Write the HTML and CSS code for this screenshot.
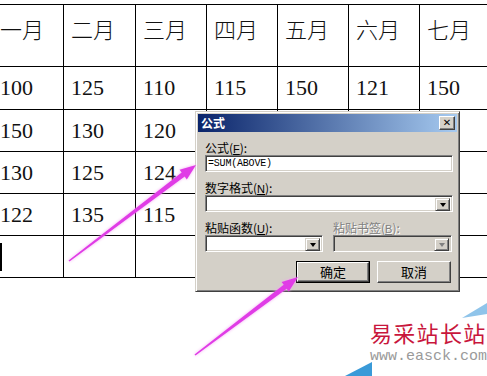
FILE: index.html
```html
<!DOCTYPE html>
<html lang="zh">
<head>
<meta charset="utf-8">
<link rel="stylesheet" href="styles.css">
</head>
<body>
<div class="page">
  <div class="sheet">
    <div class="cell head">一月</div><div class="cell head">二月</div><div class="cell head">三月</div><div class="cell head">四月</div><div class="cell head">五月</div><div class="cell head">六月</div><div class="cell head">七月</div>
    <div class="cell num">100</div><div class="cell num">125</div><div class="cell num">110</div><div class="cell num">115</div><div class="cell num">150</div><div class="cell num">121</div><div class="cell num">150</div>
    <div class="cell num">150</div><div class="cell num">130</div><div class="cell num">120</div><div class="cell num"></div><div class="cell num"></div><div class="cell num"></div><div class="cell num"></div>
    <div class="cell num">130</div><div class="cell num">125</div><div class="cell num">124</div><div class="cell num"></div><div class="cell num"></div><div class="cell num"></div><div class="cell num"></div>
    <div class="cell num">122</div><div class="cell num">135</div><div class="cell num">115</div><div class="cell num"></div><div class="cell num"></div><div class="cell num"></div><div class="cell num"></div>
    <div class="cell num"><span class="caret"></span></div><div class="cell num"></div><div class="cell num"></div><div class="cell num"></div><div class="cell num"></div><div class="cell num"></div><div class="cell num"></div>
  </div>

  <div class="dialog">
    <div class="titlebar">
      <span class="title">公式</span>
      <span class="close">✕</span>
    </div>
    <div class="body">
      <div class="label">公式(<u>F</u>):</div>
      <div class="field text">=SUM(ABOVE)</div>
      <div class="label gap">数字格式(<u>N</u>):</div>
      <div class="field combo"><span class="drop"><span class="tri"></span></span></div>
      <div class="pair gap2">
        <div class="col">
          <div class="label">粘贴函数(<u>U</u>):</div>
          <div class="field combo"><span class="drop"><span class="tri"></span></span></div>
        </div>
        <div class="col">
          <div class="label disabled">粘贴书签(<u>B</u>):</div>
          <div class="field combo off"><span class="drop"><span class="tri dim"></span></span></div>
        </div>
      </div>
      <div class="buttons">
        <div class="btn default"><span class="btn-in">确定</span></div>
        <div class="btn"><span class="btn-in">取消</span></div>
      </div>
    </div>
  </div>

  <svg class="overlay" width="487" height="376" viewBox="0 0 487 376">
    <polygon class="deco" points="462,318 487,303 487,314" />
    <polygon class="deco2" points="345,376 372,362 372,376" />
    <g class="arrow">
      <polygon points="68.5,260.4 181.7,172.6 179.6,169.8 196,165 186.8,179.4 184.7,176.6 69.5,261.6" />
      <polygon points="194.5,354.4 283.7,284.7 281.6,281.9 298,277 288.8,291.5 286.7,288.7 195.5,355.6" />
    </g>
  </svg>

  <div class="mark">
    <div class="mark-cn">易采站长站</div>
    <div class="mark-url">www.easck.com</div>
  </div>
</div>
</body>
</html>
```

FILE: styles.css
```css
html, body {
  margin: 0;
  padding: 0;
  background: #fff;
}
.page {
  position: relative;
  width: 487px;
  height: 376px;
  overflow: hidden;
  background: #fff;
}
.sheet {
  display: grid;
  grid-template-columns: 71px 72px 71px 71px 71px 71px 100px;
  grid-template-rows: 62px 43px 42px 42px 42px 42px;
  margin-left: -7px;
  padding-top: 5px;
  width: 530px;
}
.cell {
  box-sizing: border-box;
  border-right: 1px solid #000;
  border-bottom: 1px solid #000;
  border-top: 0;
  padding-left: 7px;
  color: #111;
}
.sheet > .cell:nth-child(-n+7) {
  border-top: 1px solid #000;
  height: 63px;
  margin-top: -1px;
}
.head {
  font-family: "Noto Sans CJK SC", "Noto Sans CJK JP", sans-serif;
  font-weight: 300;
  font-size: 22px;
  line-height: 22px;
  padding-top: 12px;
}
.num {
  font-family: "Liberation Serif", "Times New Roman", serif;
  font-size: 22px;
  line-height: 22px;
  display: flex;
  align-items: center;
}
.caret {
  display: block;
  width: 2px;
  height: 28px;
  background: #000;
}

/* dialog */
.dialog {
  position: absolute;
  left: 195px;
  top: 111px;
  width: 265px;
  height: 181px;
  box-sizing: border-box;
  background: #d4d0c8;
  border: 1px solid;
  border-color: #d4d0c8 #404040 #404040 #d4d0c8;
  box-shadow: inset 1px 1px #fff, inset -1px -1px #808080;
  padding: 2px;
  font-family: "Noto Sans CJK SC", sans-serif;
  font-size: 12px;
  color: #000;
}
.titlebar {
  height: 18px;
  background: linear-gradient(to right, #0a246a, #a6caf0);
  display: flex;
  align-items: center;
  justify-content: space-between;
  padding: 0 2px 0 3px;
}
.title {
  color: #fff;
  font-weight: bold;
  font-size: 12px;
  line-height: 14px;
}
.close {
  width: 16px;
  height: 14px;
  box-sizing: border-box;
  background: #d4d0c8;
  border: 1px solid;
  border-color: #fff #404040 #404040 #fff;
  box-shadow: inset -1px -1px #808080;
  font-family: "DejaVu Sans", sans-serif;
  font-size: 10px;
  font-weight: bold;
  line-height: 12px;
  text-align: center;
  color: #000;
}
.body {
  padding: 9px 4px 0 7px;
}
.label {
  line-height: 13px;
  height: 13px;
  margin-bottom: 1px;
  white-space: nowrap;
}
.label u {
  font-family: "Liberation Sans", sans-serif;
  font-size: 11px;
}
.label.gap {
  margin-top: 9px;
}
.label.disabled {
  color: #808080;
  text-shadow: 1px 1px #fff;
}
.field {
  box-sizing: border-box;
  height: 17px;
  background: #fff;
  border: 1px solid;
  border-color: #808080 #fff #fff #808080;
  box-shadow: inset 1px 1px #404040, inset -1px -1px #d4d0c8;
  position: relative;
}
.field.text {
  font-family: "Liberation Mono", "DejaVu Sans Mono", monospace;
  font-size: 10px;
  line-height: 15px;
  padding-left: 2px;
  letter-spacing: -0.2px;
}
.combo {
  display: flex;
  justify-content: flex-end;
  padding: 2px;
}
.combo.off {
  background: #d4d0c8;
}
.drop {
  width: 15px;
  height: 13px;
  box-sizing: border-box;
  background: #d4d0c8;
  border: 1px solid;
  border-color: #d4d0c8 #404040 #404040 #d4d0c8;
  box-shadow: inset 1px 1px #fff, inset -1px -1px #808080;
  display: flex;
  align-items: center;
  justify-content: center;
}
.tri {
  width: 0;
  height: 0;
  border-left: 3.5px solid transparent;
  border-right: 3.5px solid transparent;
  border-top: 4px solid #000;
  margin-top: 1px;
}
.tri.dim {
  border-top-color: #808080;
}
.pair {
  display: grid;
  grid-template-columns: 118px 119px;
  column-gap: 10px;
}
.pair.gap2 {
  margin-top: 9px;
}
.buttons {
  display: flex;
  justify-content: flex-end;
  gap: 7px;
  margin-top: 9px;
  padding-right: 2px;
}
.btn {
  width: 74px;
  height: 22px;
  box-sizing: border-box;
  background: #d4d0c8;
  border: 1px solid;
  border-color: #fff #404040 #404040 #fff;
  box-shadow: inset -1px -1px #808080;
  display: flex;
}
.btn.default {
  border: 1px solid #000;
  box-shadow: none;
}
.btn.default .btn-in {
  border: 1px solid;
  border-color: #fff #404040 #404040 #fff;
  box-shadow: inset -1px -1px #808080;
}
.btn-in {
  flex: 1;
  display: flex;
  align-items: center;
  justify-content: center;
  font-size: 13px;
  line-height: 14px;
}

/* overlays */
.overlay {
  position: absolute;
  left: 0;
  top: 0;
  pointer-events: none;
}
.arrow polygon {
  fill: #e03ce6;
  filter: drop-shadow(0 0 1.5px #f3a6f3);
}
.deco {
  fill: #8fc4ea;
}
.deco2 {
  fill: #3a9ad8;
}
.mark {
  position: absolute;
  left: 370px;
  top: 316px;
  width: 120px;
}
.mark-cn {
  font-family: "Noto Sans CJK SC", sans-serif;
  font-size: 22px;
  line-height: 32px;
  height: 32px;
  letter-spacing: 1.3px;
  color: #c8163c;
  white-space: nowrap;
}
.mark-url {
  font-family: "Liberation Mono", monospace;
  font-size: 15px;
  line-height: 15px;
  margin-top: 1px;
  color: #9a9a9a;
  white-space: nowrap;
}
```
